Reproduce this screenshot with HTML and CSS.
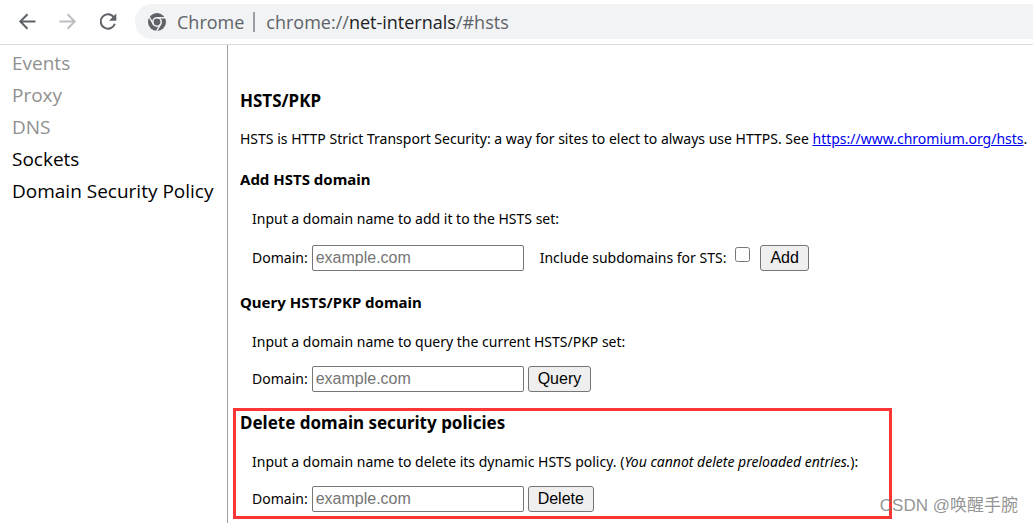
FILE: index.html
```html
<!DOCTYPE html>
<html lang="en">
<head>
<meta charset="utf-8">
<title>chrome://net-internals/#hsts</title>
<link rel="stylesheet" href="styles.css">
</head>
<body>
<header class="toolbar">
  <button class="nav-button" type="button" aria-label="Back"><svg viewBox="0 0 20 20"><path d="M18.500 9.500H3.500M10.500 2.300L3.300 9.500l7.200 7.200"/></svg></button>
  <button class="nav-button nav-button-off" type="button" aria-label="Forward"><svg viewBox="0 0 20 20"><path d="M2.500 9.500h15M10.500 2.300l7.200 7.200-7.200 7.200"/></svg></button>
  <button class="nav-button" type="button" aria-label="Reload"><svg viewBox="0 0 20 20"><path d="M17.800 11.700A7.200 7.200 0 1 1 16.800 5.300"/><path class="solid" d="M19.300 1.500v7.300H12z"/></svg></button>
  <div class="address">
    <svg class="chrome-icon" viewBox="0 0 20 20"><circle class="disc" cx="10" cy="10" r="9"/><circle class="ring" cx="10" cy="10" r="4.200"/><path class="cut" d="M10 5.800h9M6.360 12.100L1.900 4.400M13.640 12.100L9.200 19.800"/></svg>
    <span class="origin">Chrome</span>
    <span class="divider"></span>
    <span class="url">chrome://<b>net-internals</b>/#hsts</span>
  </div>
</header>
<div class="page">
  <nav class="sidebar">
    <a class="tab tab-muted" href="#events">Events</a>
    <a class="tab tab-muted" href="#proxy">Proxy</a>
    <a class="tab tab-muted" href="#dns">DNS</a>
    <a class="tab" href="#sockets">Sockets</a>
    <a class="tab" href="#hsts">Domain Security Policy</a>
  </nav>
  <main class="content">
    <h3 class="title">HSTS/PKP</h3>
    <p class="intro">HSTS is HTTP Strict Transport Security: a way for sites to elect to always use HTTPS. See <a href="https://www.chromium.org/hsts">https://www.chromium.org/hsts</a>.</p>
    <section class="block">
      <h4 class="subtitle">Add HSTS domain</h4>
      <p class="hint">Input a domain name to add it to the HSTS set:</p>
      <form class="row row-options">
        <label for="add-domain">Domain:</label>
        <input class="field" id="add-domain" type="text" placeholder="example.com">
        <label class="check-label" for="subdomains">Include subdomains for STS:</label>
        <input class="check" id="subdomains" type="checkbox">
        <button class="action" type="button">Add</button>
      </form>
    </section>
    <section class="block">
      <h4 class="subtitle">Query HSTS/PKP domain</h4>
      <p class="hint">Input a domain name to query the current HSTS/PKP set:</p>
      <form class="row">
        <label for="query-domain">Domain:</label>
        <input class="field" id="query-domain" type="text" placeholder="example.com">
        <button class="action" type="button">Query</button>
      </form>
    </section>
    <section class="highlight">
      <h3 class="title">Delete domain security policies</h3>
      <p class="hint">Input a domain name to delete its dynamic HSTS policy. (<i>You cannot delete preloaded entries.</i>):</p>
      <form class="row">
        <label for="delete-domain">Domain:</label>
        <input class="field" id="delete-domain" type="text" placeholder="example.com">
        <button class="action" type="button">Delete</button>
      </form>
    </section>
  </main>
</div>
<div class="watermark">CSDN @唤醒手腕</div>
</body>
</html>
```
FILE: styles.css
```css
* { box-sizing: border-box; }
body {
  margin: 0;
  min-height: 100vh;
  display: flex;
  flex-direction: column;
  background: #fff;
  color: #000;
  font: 14px/20px "Open Sans", "Noto Sans", sans-serif;
}
h3, h4, p, form { margin: 0; }

.toolbar {
  display: flex;
  align-items: center;
  padding: 4px 0 5px 17px;
  border-bottom: 1px solid #d9dbdd;
}
.nav-button {
  width: 20px;
  height: 20px;
  margin-right: 20px;
  padding: 0;
  border: 0;
  background: none;
  color: #5f6368;
}
.nav-button svg { display: block; fill: none; stroke: currentColor; stroke-width: 2; }
.nav-button .solid { fill: currentColor; stroke: none; }
.nav-button-off { color: #bcbec1; }
.address {
  flex: 1;
  display: flex;
  align-items: center;
  height: 35px;
  margin-left: -2px;
  padding-left: 12px;
  border-radius: 18px 0 0 18px;
  background: #f1f3f4;
  color: #5f6368;
  font-size: 18px;
  white-space: nowrap;
}
.chrome-icon { width: 20px; height: 20px; margin-right: 10px; }
.disc { fill: #5f6368; }
.ring { fill: #5f6368; stroke: #f1f3f4; stroke-width: 1.600; }
.cut { fill: none; stroke: #f1f3f4; stroke-width: 1.400; }
.divider { width: 2px; height: 20px; margin: 0 11px 0 9px; background: #9aa0a6; }
.url b { color: #202124; font-weight: 400; }

.page { flex: 1; display: flex; }
.sidebar {
  flex: none;
  width: 228px;
  padding: 2px 12px;
  border-right: 1px solid #a0a0a0;
}
.tab {
  display: block;
  color: #000;
  font-size: 19px;
  line-height: 32px;
  text-decoration: none;
  white-space: nowrap;
}
.tab-muted { color: #909090; }

.content {
  flex: 1;
  min-width: 0;
  padding: 46px 0 0 12px;
  font-family: "Noto Sans", "Open Sans", sans-serif;
}
.title { font-size: 17px; line-height: 20px; }
.subtitle { font-size: 15px; line-height: 20px; }
.intro { margin-top: 18px; white-space: nowrap; }
.intro a { color: #00e; }
.block { margin-top: 20px; }
.block + .block { margin-top: 21px; }
.hint { margin: 20px 0 0 12px; }
.row { display: flex; align-items: center; gap: 4px; margin: 14px 0 0 12px; }
.row-options { margin-top: 16px; }
.field {
  width: 212px;
  height: 26px;
  padding: 0 3px;
  border: 1px solid #767676;
  border-radius: 2px;
  background: #fff;
  font: 16px "Liberation Sans", sans-serif;
}
.field::placeholder { color: #757575; }
.check-label { margin-left: 12px; }
.check { width: 15px; height: 15px; margin: 0 6px 8px 5px; }
.action {
  height: 26px;
  padding: 0 9px;
  border: 1px solid #767676;
  border-radius: 3px;
  background: #efefef;
  color: #000;
  font: 16px "Liberation Sans", sans-serif;
}
.highlight {
  width: 659px;
  max-width: 100%;
  margin: 16px 0 0 -7px;
  padding: 2px 4px 4px;
  border: 3px solid #fc3636;
}
.highlight .hint { margin-top: 19px; }

.watermark {
  position: absolute;
  right: 15px;
  bottom: 5px;
  color: rgba(120, 120, 120, 0.8);
  font: 17px/24px "Liberation Sans", "Noto Sans CJK SC", sans-serif;
}
```
